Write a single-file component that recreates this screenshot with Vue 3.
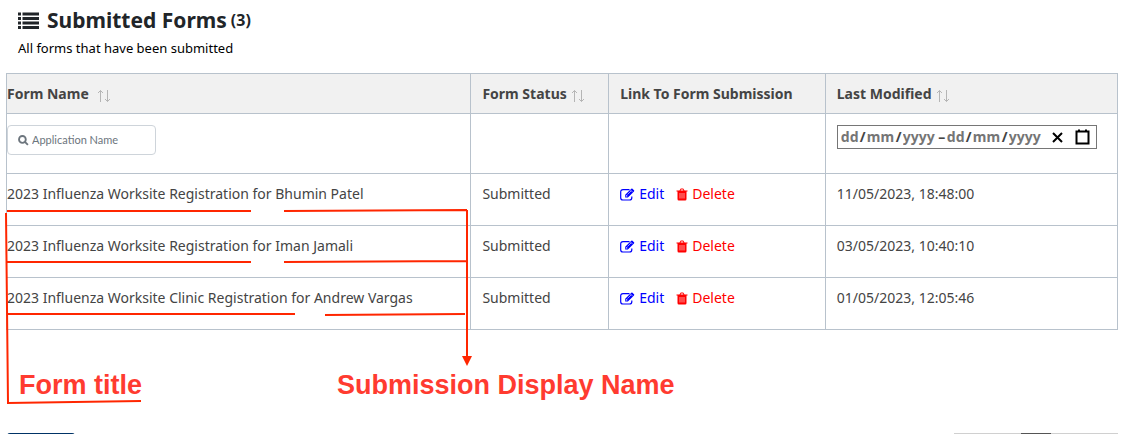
<script setup>
import { ref } from 'vue'

const search = ref('')
const dateParts = [
  { kind: 'day', hint: 'dd' },
  { kind: 'month', hint: 'mm' },
  { kind: 'year', hint: 'yyyy' },
]
const columns = [
  { key: 'name', label: 'Form Name', sortable: true },
  { key: 'status', label: 'Form Status', sortable: true },
  { key: 'link', label: 'Link To Form Submission', sortable: false },
  { key: 'modified', label: 'Last Modified', sortable: true },
]
const rows = [
  { name: '2023 Influenza Worksite Registration for Bhumin Patel', modified: '11/05/2023, 18:48:00' },
  { name: '2023 Influenza Worksite Registration for Iman Jamali', modified: '03/05/2023, 10:40:10' },
  { name: '2023 Influenza Worksite Clinic Registration for Andrew Vargas', modified: '01/05/2023, 12:05:46' },
]
</script>

<template>
  <main class="page">
    <header class="heading">
      <h1>
        <svg class="list-icon" viewBox="0 0 21 17" aria-hidden="true">
          <path d="M0 .5h3v3H0zM4.500 .5H21v3H4.500zM0 5h3v3H0zM4.500 5H21v3H4.500zM0 9.500h3v3H0zM4.500 9.500H21v3H4.500zM0 14h3v3H0zM4.500 14H21v3H4.500z" />
        </svg>
        <span>Submitted Forms</span>
        <small>(3)</small>
      </h1>
      <p>All forms that have been submitted</p>
    </header>

    <table class="forms">
      <colgroup>
        <col class="col-name" />
        <col class="col-status" />
        <col class="col-link" />
        <col class="col-modified" />
      </colgroup>
      <thead>
        <tr>
          <th v-for="c in columns" :key="c.key" :class="c.key" scope="col">
            <span class="th-inner">
              {{ c.label }}
              <button v-if="c.sortable" class="sort" type="button" :aria-label="'Sort by ' + c.label">
                <svg viewBox="0 0 13 14" aria-hidden="true">
                  <path d="M3.500 13V1.500M1 4l2.500-2.500L6 4M10.500 1v11.500M8 10l2.500 2.500L13 10" />
                </svg>
              </button>
            </span>
          </th>
        </tr>
      </thead>
      <tbody>
        <tr class="filters">
          <td>
            <label class="search">
              <svg viewBox="0 0 12 12" aria-hidden="true">
                <circle cx="4.800" cy="4.800" r="3.700" />
                <path d="M7.600 7.600l3.200 3.200" />
              </svg>
              <input v-model="search" type="text" placeholder="Application Name" aria-label="Application Name" />
            </label>
          </td>
          <td></td>
          <td></td>
          <td>
            <div class="range">
              <template v-for="side in ['from', 'to']" :key="side">
                <span v-if="side === 'to'" class="dash">–</span>
                <template v-for="(p, i) in dateParts" :key="p.kind">
                  <span v-if="i" class="slash">/</span>
                  <input :class="p.kind" type="text" :placeholder="p.hint" :aria-label="side + ' ' + p.kind" />
                </template>
              </template>
              <button type="button" class="clear" aria-label="Clear dates">
                <svg viewBox="0 0 19 19" aria-hidden="true"><path d="M5 5l9 9M14 5l-9 9" /></svg>
              </button>
              <button type="button" aria-label="Open calendar">
                <svg viewBox="0 0 19 19" aria-hidden="true"><path d="M3.500 3.500h12v12h-12zM6 1.500v2M13 1.500v2" /></svg>
              </button>
            </div>
          </td>
        </tr>
        <tr v-for="r in rows" :key="r.name">
          <td>{{ r.name }}</td>
          <td>Submitted</td>
          <td>
            <div class="actions">
              <a class="edit" href="#">
                <svg viewBox="0 0 15 13" aria-hidden="true">
                  <path class="line" d="M9.500 1.700H3Q.7 1.700 .7 4v5.700Q.7 12 3 12h6.500q2.300 0 2.300-2.300V8.500" />
                  <path d="M5.200 9.500V6.800L11.300.7q.6-.6 1.200 0l1.500 1.500q.6.600 0 1.200L7.900 9.500z" />
                  <path class="gap" d="M6.300 8.300l1-.2-.8-.8zM7.500 6.500l3.600-3.600M10.500 2l2.200 2.200" />
                </svg>
                Edit
              </a>
              <a class="delete" href="#">
                <svg viewBox="0 0 12 13" aria-hidden="true">
                  <path d="M.5 2.500h3L4.200 1.200Q4.500.5 5 .5h2q.5 0 .8.700L8.500 2.500h3v1h-1V11q0 1.500-1.300 1.500H2.800Q1.500 12.500 1.500 11V3.500h-1zM4.600 2.500h2.800L7 1.500H5z" fill-rule="evenodd" />
                  <path class="gap" d="M4 5v5.500M6 5v5.500M8 5v5.500" />
                </svg>
                Delete
              </a>
            </div>
          </td>
          <td>{{ r.modified }}</td>
        </tr>
      </tbody>
    </table>

    <footer class="footer">
      <button class="primary" type="button" aria-label="New form"></button>
      <nav class="pager" aria-label="Pages">
        <button type="button" class="wide" aria-label="Previous page"></button>
        <button type="button" class="current" aria-label="Page 1"></button>
        <button type="button" class="wide" aria-label="Next page"></button>
      </nav>
    </footer>

    <div class="notes">
      <svg viewBox="0 0 1132 434" aria-hidden="true">
        <path d="M7 211H251M7 262H251M7 314H295M284 211L467 210M284 262L467 261M325 315L465 314M467 210V357M6 213L8 403L141 401" />
        <path class="tip" d="M462 356h10l-5 10z" />
      </svg>
      <strong class="note title-note">Form title</strong>
      <strong class="note name-note">Submission Display Name</strong>
    </div>
  </main>
</template>

<style>
body {
  margin: 0;
  background: #fff;
}
</style>

<style scoped>
* {
  box-sizing: border-box;
}
.page {
  position: relative;
  display: flex;
  flex-direction: column;
  height: 100vh;
  overflow: hidden;
  padding: 8px 14px 0 6px;
  font: 14px/20px "Noto Sans", sans-serif;
  color: #444;
}
.heading {
  padding-left: 12px;
  margin-bottom: 15px;
}
h1 {
  display: flex;
  align-items: center;
  margin: 0;
  font-size: 21px;
  line-height: 24px;
  color: #212529;
}
h1 small {
  margin-left: 4px;
  font-size: 16px;
}
.list-icon {
  width: 21px;
  height: 17px;
  margin-right: 8px;
  fill: #212529;
}
.heading p {
  margin: 6px 0 0;
  font-size: 13px;
  color: #000;
}
.forms {
  width: 100%;
  flex: none;
  table-layout: fixed;
  border-collapse: collapse;
}
.col-name {
  width: 41.800%;
}
.col-status {
  width: 12.400%;
}
.col-link {
  width: 19.500%;
}
th,
td {
  padding: 10px 11px 9px;
  border: 1px solid #b8c2cc;
  text-align: left;
  vertical-align: top;
}
th:first-child,
td:first-child {
  padding-left: 0;
}
td {
  height: 52px;
}
th {
  height: 40px;
  background: #f1f1f1;
}
.th-inner {
  display: flex;
  align-items: center;
}
.sort {
  display: flex;
  margin: 4px 0 0 4px;
  padding: 0;
  border: 0;
  background: none;
}
.name .sort {
  margin-left: 8px;
}
.sort svg {
  width: 13px;
  height: 14px;
  fill: none;
  stroke: #b5b5b5;
}
.filters td {
  height: 60px;
}
.search {
  display: flex;
  align-items: center;
  width: 149px;
  height: 30px;
  margin-top: 1px;
  padding: 0 10px;
  border: 1px solid #ced4da;
  border-radius: 4px;
}
.search svg {
  flex: none;
  width: 11px;
  height: 11px;
  margin-right: 3px;
  fill: none;
  stroke: #6c757d;
  stroke-width: 2;
}
input {
  min-width: 0;
  padding: 0;
  border: 0;
  outline: 0;
  background: none;
  font: inherit;
  color: inherit;
}
.search input {
  flex: 1;
  font-family: Lato, sans-serif;
  font-size: 11px;
}
.search input::placeholder {
  color: #6c757d;
  opacity: 1;
}
.range {
  display: inline-flex;
  align-items: center;
  height: 24px;
  margin-top: 1px;
  padding: 0 1px 0 3px;
  border: 1px solid #767676;
  font-weight: 700;
}
.range input::placeholder {
  color: #757575;
  opacity: 1;
}
.range .day {
  width: 19px;
}
.range .month {
  width: 29px;
}
.range .year {
  width: 34px;
}
.slash {
  width: 7px;
}
.dash {
  width: 10px;
  text-align: center;
}
.range button {
  display: flex;
  padding: 0 3px;
  border: 0;
  background: none;
}
.range .clear {
  margin-left: 2px;
}
.range svg {
  width: 19px;
  height: 19px;
  fill: none;
  stroke: #000;
  stroke-width: 2;
}
.actions {
  display: flex;
  gap: 12px;
}
.actions a {
  display: flex;
  align-items: center;
  gap: 4px;
  text-decoration: none;
}
.edit {
  color: #00f;
}
.delete {
  color: #f00;
}
.actions svg {
  width: 15px;
  height: 13px;
  fill: currentColor;
}
.actions .delete svg {
  width: 12px;
}
.actions .line {
  fill: none;
  stroke: currentColor;
  stroke-width: 1.200;
}
.actions .gap {
  fill: none;
  stroke: #fff;
  stroke-width: .6;
}
.footer {
  display: flex;
  flex: none;
  justify-content: space-between;
  margin-top: 103px;
}
.footer button {
  height: 36px;
  padding: 0;
  border: 0;
}
.primary {
  width: 68px;
  margin-left: 1px;
  border-radius: 3px;
  background: #003366;
}
.pager {
  display: flex;
}
.pager .wide {
  width: 67px;
  background: #d0d0d0;
}
.pager .current {
  width: 30px;
  background: #555;
}
.notes {
  position: absolute;
  top: 0;
  left: 0;
  pointer-events: none;
}
.notes svg {
  display: block;
  width: 1132px;
  height: 434px;
  fill: none;
  stroke: #ff2600;
  stroke-width: 2;
}
.notes .tip {
  fill: #ff2600;
  stroke: none;
}
.note {
  position: absolute;
  font: 700 27px/32px "Liberation Sans", Arial, sans-serif;
  color: #ff3b30;
  white-space: nowrap;
}
.title-note {
  top: 369px;
  left: 19px;
}
.name-note {
  top: 369px;
  left: 337px;
}
</style>
